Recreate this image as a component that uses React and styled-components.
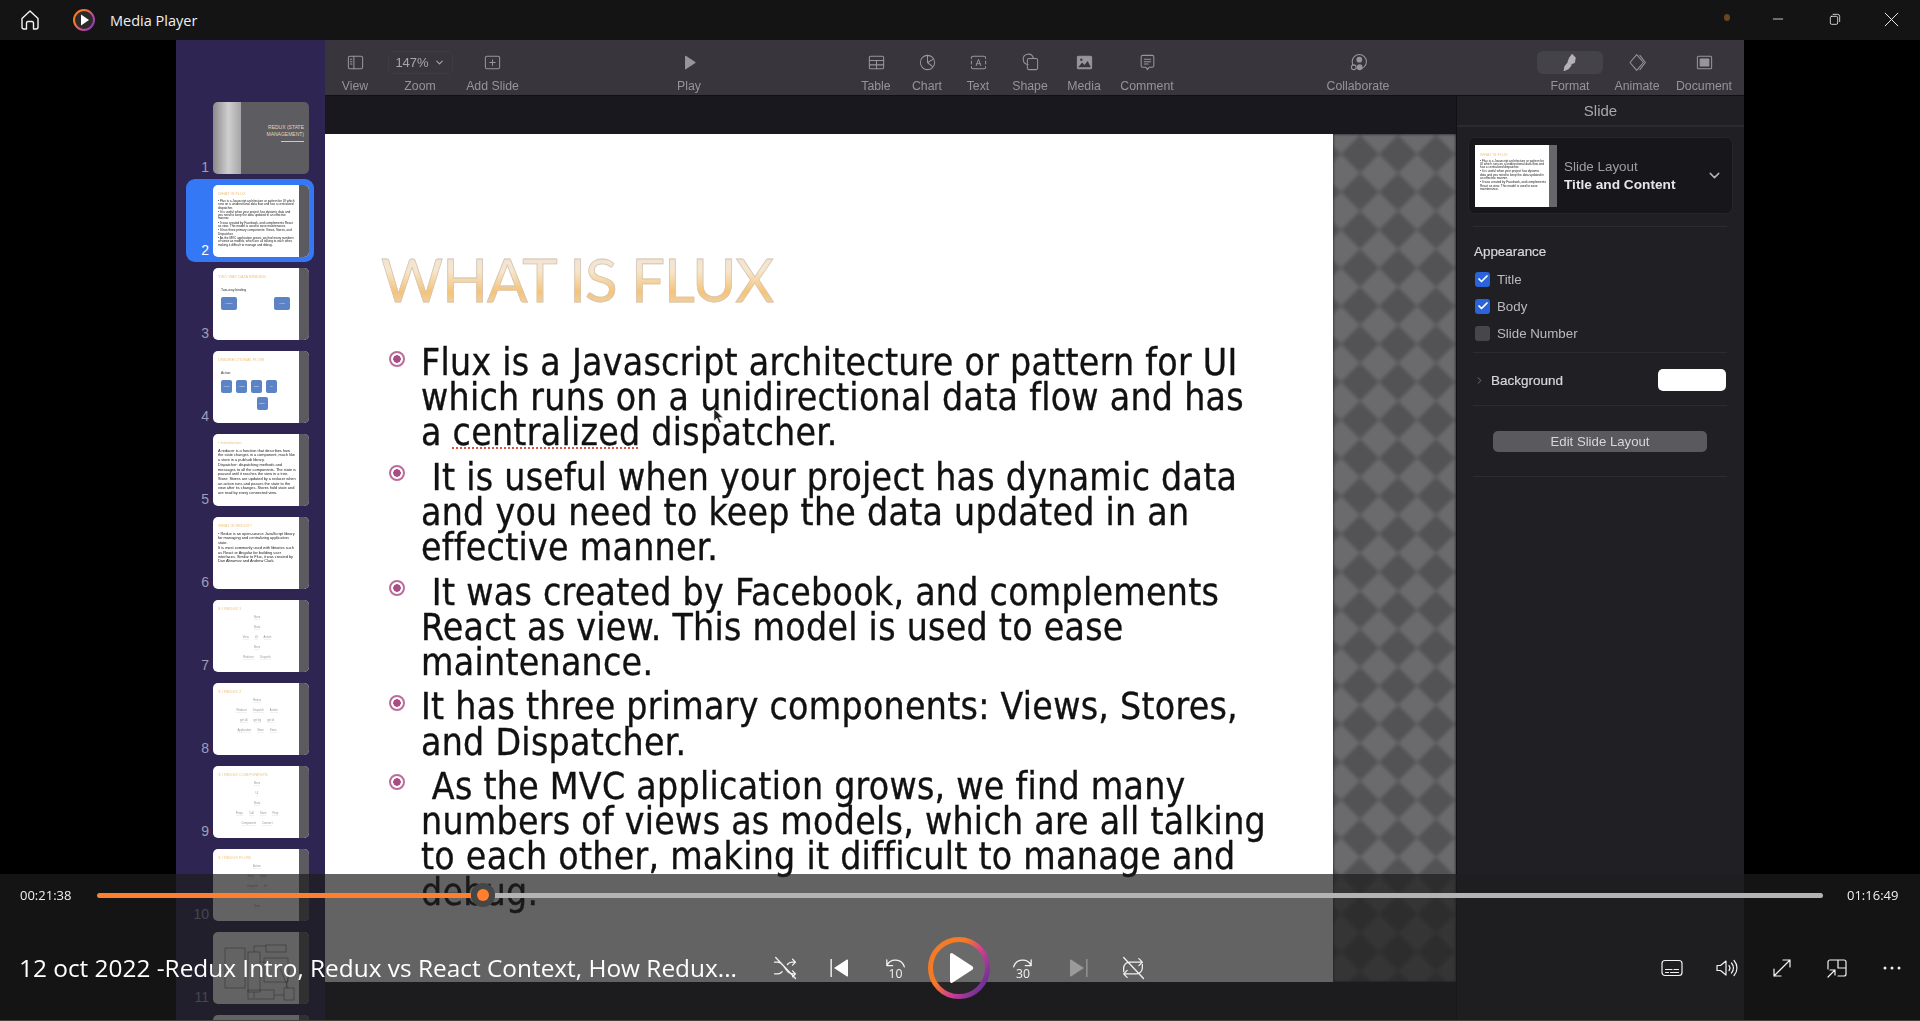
import React from 'react'
import styled, { createGlobalStyle } from 'styled-components'
import { Check, ChevronDown, ChevronRight } from 'lucide-react'

const GlobalStyle = createGlobalStyle`
  html, body, #root { margin: 0; padding: 0; height: 100%; background: #000; }
  * { box-sizing: border-box; }
`

const Misspelt = styled.span`
    text-decoration: underline dotted #e2533f 2px;
    text-underline-offset: 2px;
`

const Icon = ({ size = 20, children, ...rest }) => (
  <svg width={size} height={size} viewBox="0 0 24 24" fill="none" stroke="currentColor" strokeWidth="1.5" strokeLinecap="round" strokeLinejoin="round" {...rest}>
    {children}
  </svg>
)

const toolIcons = {
  view: <><rect x="3" y="4" width="18" height="16" rx="2" /><path d="M10 4v16M5.5 8h2M5.5 11h2M5.5 14h2" /></>,
  add: <><rect x="3" y="4" width="18" height="16" rx="2" /><path d="M12 8.5v7M8.5 12h7" /></>,
  play: <path d="M7 4 19 12 7 20Z" fill="currentColor" />,
  table: <><rect x="3" y="4" width="18" height="16" rx="1.5" /><path d="M3 9.5h18M3 15h18M12 9.5V20" /></>,
  chart: <><circle cx="12" cy="12" r="9" /><path d="M12 3v9l6 5M12 12l7-4" /></>,
  text: <><path d="M5 4h14a2 2 0 0 1 2 2v1M21 17v1a2 2 0 0 1-2 2H5a2 2 0 0 1-2-2v-1M3 7V6a2 2 0 0 1 2-2M3 10v4M21 10v4" /><path d="M9 16l3-8 3 8M10 13.5h4" strokeWidth="1.2" /></>,
  shape: <><path d="M9 14.5A6.5 6.5 0 1 1 15.5 6" /><rect x="8" y="7" width="13" height="14" rx="2" /></>,
  media: <><rect x="3" y="4" width="18" height="16" rx="1.5" fill="currentColor" /><path d="M4 18l5-6 3 3 4-5 4 8Z" fill="#38353c" stroke="none" /><circle cx="8" cy="8.5" r="1.5" fill="#38353c" stroke="none" /></>,
  comment: <><path d="M6 3h12a2 2 0 0 1 2 2v11a2 2 0 0 1-2 2h-4l-2 3-2-3H6a2 2 0 0 1-2-2V5a2 2 0 0 1 2-2Z" /><path d="M8 8h8M8 11h8M8 14h5" /></>,
  collaborate: <><circle cx="13" cy="11" r="9" /><circle cx="13" cy="8.5" r="3" fill="currentColor" /><circle cx="6" cy="18" r="3" fill="#38353c" /><circle cx="13.5" cy="18" r="3" fill="currentColor" /></>,
  format: <><path d="M14 2l4 4-1 6-5 2-3-3 2-5Z" fill="currentColor" /><path d="M9.500 11.500 5 17l-1 5 5-2 4-5" fill="currentColor" /></>,
  animate: <><path d="M11 2l8.5 10L11 22 2.500 12Z" /><path d="M15 3l7 9-7 9" /></>,
  document: <><rect x="3" y="4" width="18" height="16" rx="1.5" /><rect x="6.5" y="7.5" width="11" height="9" fill="currentColor" /></>,
}

const tools = [
  { key: 'view', label: 'View', w: 60 },
  { key: 'zoom', label: 'Zoom', w: 70 },
  { key: 'add', label: 'Add Slide', w: 75 },
  { key: 'play', label: 'Play', w: 60, gap: 129 },
  { key: 'table', label: 'Table', w: 50, gap: 132 },
  { key: 'chart', label: 'Chart', w: 52 },
  { key: 'text', label: 'Text', w: 50 },
  { key: 'shape', label: 'Shape', w: 54 },
  { key: 'media', label: 'Media', w: 54 },
  { key: 'comment', label: 'Comment', w: 72 },
  { key: 'collaborate', label: 'Collaborate', w: 90, gap: 130 },
  { key: 'format', label: 'Format', w: 66, gap: 134, active: true },
  { key: 'animate', label: 'Animate', w: 68 },
  { key: 'document', label: 'Document', w: 66 },
]

const slideParagraphs = [
  ['Flux is a Javascript architecture or pattern for UI', 'which runs on a unidirectional data flow and has', <>a <Misspelt>centralized</Misspelt> dispatcher.</>],
  ['\u00a0It is useful when your project has dynamic data', 'and you need to keep the data updated in an', 'effective manner.'],
  ['\u00a0It was created by Facebook, and complements', 'React as view. This model is used to ease', 'maintenance.'],
  ['It has three primary components: Views, Stores,', 'and Dispatcher.'],
  ['\u00a0As the MVC application grows, we find many', 'numbers of views as models, which are all talking', 'to each other, making it difficult to manage and', 'debug.'],
]

const miniLines = [
  'Flux is a Javascript architecture or pattern for UI which runs on a unidirectional data flow and has a centralized dispatcher.',
  'It is useful when your project has dynamic data and you need to keep the data updated in an effective manner.',
  'It was created by Facebook, and complements React as view. This model is used to ease maintenance.',
  'It has three primary components: Views, Stores, and Dispatcher.',
  'As the MVC application grows, we find many numbers of views as models, which are all talking to each other, making it difficult to manage and debug.',
]

const CoverThumb = () => (
  <CoverBody>
    <CoverBand />
    <CoverTitle>REDUX (STATE<br />MANAGEMENT)<CoverRule /></CoverTitle>
  </CoverBody>
)

const FluxThumb = () => (
  <ThumbBody>
    <ThumbTitle>WHAT IS FLUX</ThumbTitle>
    {miniLines.map((l) => <ThumbText key={l}>• {l}</ThumbText>)}
  </ThumbBody>
)

const BoxesThumb = ({ title, label, boxes }) => (
  <ThumbBody>
    <ThumbTitle>{title}</ThumbTitle>
    <ThumbLabel>{label}</ThumbLabel>
    <BoxRow $spread={boxes.length === 2}>
      {boxes.map((b) => <ThumbBox key={b} $wide={boxes.length === 2}>{b}</ThumbBox>)}
    </BoxRow>
    {boxes.length > 2 && <BoxRow $end><ThumbBox>Store</ThumbBox></BoxRow>}
  </ThumbBody>
)

const TextThumb = ({ title, lines }) => (
  <ThumbBody>
    <ThumbTitle>{title}</ThumbTitle>
    {lines.map((l) => <ThumbText key={l} $large>{l}</ThumbText>)}
  </ThumbBody>
)

const DiagramThumb = ({ title, rows }) => (
  <ThumbBody>
    <ThumbTitle>{title}</ThumbTitle>
    {rows.map((r, i) => (
      <ChipRow key={i}>
        {r.map((c, j) => <ThumbChip key={j}>{c}</ThumbChip>)}
      </ChipRow>
    ))}
  </ThumbBody>
)

const FlowThumb = () => (
  <ThumbBody>
    <svg width="84" height="72" viewBox="0 0 84 72" fill="none" stroke="#444" strokeWidth="0.5">
      <rect x="7" y="10" width="20" height="40" />
      <rect x="30" y="14" width="12" height="40" />
      <rect x="48" y="7" width="20" height="7" />
      <path d="M36 8h12M36 8v6M42 24h10M36 54v6" />
      <rect x="46" y="20" width="24" height="24" />
      <rect x="30" y="52" width="26" height="9" />
      <rect x="66" y="50" width="10" height="12" />
      <path d="M56 57h10M62 30l8 20M72 30l-4 20" />
    </svg>
  </ThumbBody>
)

const EmptyThumb = () => <ThumbBody />

const thumbs = [
  <CoverThumb />,
  <FluxThumb />,
  <BoxesThumb title="TWO WAY DATA BINDING" label="Two-way binding" boxes={['Model', 'View']} />,
  <BoxesThumb title="UNIDIRECTIONAL FLOW" label="Action" boxes={['View', 'Action', 'Disp', 'UI']} />,
  <TextThumb title="• Introduction" lines={['A reducer is a function that describes how the state changes in a component, much like a store in a pub/sub library.', 'Dispatcher: dispatching methods and messages to all the components. The state is passed until it reaches the view in a tree.', 'Store: Stores are updated by a reducer when an action runs and passes the state to the view after its changes. Stores hold state and are read by every connected view.']} />,
  <TextThumb title="WHAT IS REDUX?" lines={['• Redux is an open-source JavaScript library for managing and centralizing application state.', 'It is most commonly used with libraries such as React or Angular for building user interfaces. Similar to Flux, it was created by Dan Abramov and Andrew Clark.']} />,
  <DiagramThumb title="S I REDUX 1" rows={[['Store'], ['State'], ['View', 'UI', 'Action'], ['Store'], ['Reducer', 'Dispatch']]} />,
  <DiagramThumb title="S I REDUX 2" rows={[['Redux'], ['Reducer', 'Dispatch', 'Action'], ['get all', 'get by', 'get id'], ['Application', 'Store', 'Store']]} />,
  <DiagramThumb title="S I REDUX COMPONENTS" rows={[['Store'], ['UI'], ['State'], ['Props', 'Call', 'Store', 'Prop'], ['Component', 'Connect']]} />,
  <DiagramThumb title="S I REDUX FLOW" rows={[['Action'], ['Store', 'State'], ['Dispatch', 'UI'], ['Reducer'], ['View']]} />,
  <FlowThumb />,
  <EmptyThumb />,
]

const TransportIcon = ({ children, dim }) => (
  <ControlButton $dim={dim}><Icon size={28} strokeWidth="1.1">{children}</Icon></ControlButton>
)

const App = () => {
  return (
    <Page>
      <GlobalStyle />
      <TitleBar>
        <HomeButton>
          <Icon size={24} strokeWidth="1.4"><path d="M4 10.5 12 3l8 7.5V19a2 2 0 0 1-2 2h-2.5v-6a1.5 1.5 0 0 0-1.5-1.5h-4A1.5 1.5 0 0 0 8.5 15v6H6a2 2 0 0 1-2-2Z" /></Icon>
        </HomeButton>
        <svg width="24" height="24" viewBox="0 0 24 24">
          <defs>
            <linearGradient id="logoRing" x1="0" y1="0.2" x2="1" y2="0.9">
              <stop offset="0.25" stopColor="#f47a25" />
              <stop offset="0.65" stopColor="#c8439a" />
              <stop offset="1" stopColor="#7d3fc0" />
            </linearGradient>
          </defs>
          <circle cx="12" cy="12" r="10" fill="#2b2b2b" stroke="url(#logoRing)" strokeWidth="2" />
          <path d="M9 6.5 17 12l-8 5.5Z" fill="#fff" />
        </svg>
        <AppName>Media Player</AppName>
        <WindowControls>
          <RecordDot />
          <WindowButton><Icon size={16} strokeWidth="1.2"><path d="M5 12h14" /></Icon></WindowButton>
          <WindowButton><Icon size={16} strokeWidth="1.2"><rect x="5" y="8" width="11" height="12" rx="2" /><path d="M9 5h7a3 3 0 0 1 3 3v8" /></Icon></WindowButton>
          <WindowButton><Icon size={19} strokeWidth="1.2"><path d="M4 4l16 16M20 4 4 20" /></Icon></WindowButton>
        </WindowControls>
      </TitleBar>

      <Stage>
        <Frame>
          <Sidebar>
            {thumbs.map((t, i) => (
              <ThumbRow key={i} $selected={i === 1}>
                <ThumbNumber $selected={i === 1}>{i + 1}</ThumbNumber>
                <Thumb>
                  {t}
                  {i > 0 && <ThumbEdge />}
                </Thumb>
              </ThumbRow>
            ))}
          </Sidebar>

          <Main>
            <Toolbar>
              {tools.map((t) => (
                <ToolItem key={t.key} $w={t.w} $gap={t.gap || 0}>
                  {t.key === 'zoom' ? (
                    <ZoomBox>147% <ChevronDown size={11} strokeWidth={2.4} /></ZoomBox>
                  ) : (
                    <ToolIcon $active={t.active}><Icon size={19} strokeWidth="1.3">{toolIcons[t.key]}</Icon></ToolIcon>
                  )}
                  <ToolLabel>{t.label}</ToolLabel>
                </ToolItem>
              ))}
            </Toolbar>

            <Workspace>
              <Canvas>
                <SlideRow>
                  <Slide>
                    <SlideTitle>WHAT IS FLUX</SlideTitle>
                    <BulletList>
                      {slideParagraphs.map((p, i) => (
                        <BulletItem key={i}>
                          <Bullet />
                          <BulletText>
                            {p.map((line, j) => <React.Fragment key={j}>{line}<br /></React.Fragment>)}
                          </BulletText>
                        </BulletItem>
                      ))}
                    </BulletList>
                    <Pointer width="12" height="17" viewBox="0 0 12 17">
                      <path d="M1 1v12l3-3 2.2 5 2-1-2.2-4.6H10Z" fill="#222" stroke="#ddd" strokeWidth="0.6" />
                    </Pointer>
                  </Slide>
                  <SlidePattern />
                </SlideRow>
              </Canvas>

              <Inspector>
                <InspectorTitle>Slide</InspectorTitle>
                <LayoutCard>
                  <LayoutThumb>
                    <LayoutThumbTitle>WHAT IS FLUX</LayoutThumbTitle>
                    {miniLines.slice(0, 3).map((l) => <ThumbText key={l}>• {l}</ThumbText>)}
                  </LayoutThumb>
                  <LayoutThumbBand />
                  <LayoutText>
                    <LayoutCaption>Slide Layout</LayoutCaption>
                    <LayoutName>Title and Content</LayoutName>
                  </LayoutText>
                  <LayoutChevron><ChevronDown size={17} strokeWidth={2} /></LayoutChevron>
                </LayoutCard>
                <Divider $top={12} />
                <SectionHeading>Appearance</SectionHeading>
                <CheckRow><CheckBox $on><Check size={12} strokeWidth={3.5} /></CheckBox>Title</CheckRow>
                <CheckRow><CheckBox $on><Check size={12} strokeWidth={3.5} /></CheckBox>Body</CheckRow>
                <CheckRow><CheckBox />Slide Number</CheckRow>
                <Divider $top={1} />
                <BackgroundRow>
                  <ChevronRight size={11} strokeWidth={1.6} color="#8d8c90" />
                  <BackgroundLabel>Background</BackgroundLabel>
                  <Swatch />
                </BackgroundRow>
                <Divider $top={14} />
                <EditButton>Edit Slide Layout</EditButton>
                <Divider $top={24} />
              </Inspector>
            </Workspace>
          </Main>
        </Frame>

        <Controls>
          <SeekRow>
            <Time>00:21:38</Time>
            <Track>
              <TrackFill style={{ width: '21.64%' }} />
              <Knob><KnobDot /></Knob>
              <TrackRest />
            </Track>
            <Time>01:16:49</Time>
          </SeekRow>
          <ControlRow>
            <VideoTitle>12 oct 2022 -Redux Intro, Redux vs React Context, How Redux...</VideoTitle>
            <Transport>
              <TransportIcon>
                <path d="M3 7h2.5c2 0 3.5 1 5 3l3 4c1.500 2 3 3 5 3H21M3 17h3c1.500 0 2.500-.7 3.500-1.800M14 9c1-1.300 2.500-2 4-2h3M18.500 4.500 21 7l-2.500 2.500M18.500 14.500 21 17l-2.500 2.500M4 3l17 18" />
              </TransportIcon>
              <ControlButton>
                <svg width="28" height="28" viewBox="0 0 28 28" fill="#fff"><rect x="4.500" y="5" width="1.300" height="18" /><path d="M8 14 21 5.500a.8.8 0 0 1 1 .8v15.400a.8.8 0 0 1-1 .8Z" /></svg>
              </ControlButton>
              <TransportIcon>
                <path d="M5 10a8 8 0 0 1 15 1M5 5v5h5" />
                <SeekLabel x="12.500" y="20.300">10</SeekLabel>
              </TransportIcon>
              <PlayButton>
                <svg width="62" height="62" viewBox="0 0 62 62">
                  <defs>
                    <linearGradient id="playRing" x1="0.1" y1="0.2" x2="0.95" y2="0.8">
                      <stop offset="0.3" stopColor="#f47a25" />
                      <stop offset="0.62" stopColor="#cf3f8f" />
                      <stop offset="1" stopColor="#6f2f9c" />
                    </linearGradient>
                  </defs>
                  <circle cx="31" cy="31" r="28.500" fill="rgba(255,255,255,0.05)" stroke="url(#playRing)" strokeWidth="5" />
                  <path d="M22 17.500a1.500 1.500 0 0 1 2.300-1.200l20 13a2 2 0 0 1 0 3.400l-20 13a1.500 1.500 0 0 1-2.300-1.200Z" fill="#fff" />
                </svg>
              </PlayButton>
              <TransportIcon>
                <path d="M19 10a8 8 0 0 0-15 1M19 5v5h-5" />
                <SeekLabel x="12" y="20.300">30</SeekLabel>
              </TransportIcon>
              <ControlButton $dim>
                <svg width="28" height="28" viewBox="0 0 28 28" fill="#fff"><rect x="22.200" y="5" width="1.300" height="18" /><path d="M20 14 7 5.500a.8.8 0 0 0-1 .8v15.400a.8.8 0 0 0 1 .8Z" /></svg>
              </ControlButton>
              <TransportIcon>
                <path d="M4 15v-3a5 5 0 0 1 5-5h11M17 4l3 3-3 3M20 9v3a5 5 0 0 1-5 5H4M7 20l-3-3 3-3M4 3l17 18" />
              </TransportIcon>
            </Transport>
            <RightControls>
              <ControlButton>
                <Icon size={24} strokeWidth="1.2"><rect x="2" y="4.500" width="20" height="15" rx="3" /><path d="M5.500 13.500h6.500M14 13.500h4.500M5.500 16.500h3M10.500 16.500h8" /></Icon>
              </ControlButton>
              <ControlButton>
                <Icon size={24} strokeWidth="1.200"><path d="M2 9.500v5h3.500L11 19V5L5.500 9.500Z" /><path d="M14 9.500a4 4 0 0 1 0 5M16.500 7a7.500 7.500 0 0 1 0 10M19 4.500a11 11 0 0 1 0 15" /></Icon>
              </ControlButton>
              <ControlButton>
                <Icon size={24} strokeWidth="1.200"><path d="M4 20 20 4M13 4h7v7M4 13v7h7" /></Icon>
              </ControlButton>
              <ControlButton>
                <Icon size={24} strokeWidth="1.200"><path d="M3 13V6a2 2 0 0 1 2-2h14a2 2 0 0 1 2 2v12a2 2 0 0 1-2 2h-6M13 4v8h8M3 21l7-7M5 14h5v5" /></Icon>
              </ControlButton>
              <ControlButton>
                <svg width="24" height="24" viewBox="0 0 24 24" fill="#eee"><circle cx="5" cy="12" r="1.500" /><circle cx="12" cy="12" r="1.500" /><circle cx="19" cy="12" r="1.500" /></svg>
              </ControlButton>
            </RightControls>
          </ControlRow>
        </Controls>
      </Stage>
    </Page>
  )
}

export default App

const Page = styled.div`
    width: 1920px;
    height: 1021px;
    display: flex;
    flex-direction: column;
    overflow: hidden;
    background: #000;
    font-family: "Open Sans", "Noto Sans", sans-serif;
`

const TitleBar = styled.div`
    height: 40px;
    flex: none;
    display: flex;
    align-items: center;
    background: #141414;
    color: #f4f4f4;
`

const HomeButton = styled.div`
    width: 60px;
    margin-right: 12px;
    display: flex;
    justify-content: center;
`

const AppName = styled.div`
    margin-left: 14px;
    font-size: 14.5px;
    color: #f0f0f0;
`

const WindowControls = styled.div`
    margin-left: auto;
    margin-top: -2px;
    display: flex;
    align-items: center;
`

const RecordDot = styled.div`
    width: 6px;
    height: 7px;
    margin: -4px 19px 0 0;
    border-radius: 50%;
    background: #6b4421;
`

const WindowButton = styled.div`
    width: 57px;
    display: flex;
    justify-content: center;
`

const Stage = styled.div`
    position: relative;
    flex: 1;
    min-height: 0;
    display: flex;
    justify-content: center;
`

const Frame = styled.div`
    width: 1568px;
    display: flex;
    font-family: "Liberation Sans", Arial, sans-serif;
    filter: blur(0.35px);
`

const Sidebar = styled.div`
    width: 149px;
    flex: none;
    padding: 56px 11px 0 10px;
    background: #2e2552;
    overflow: hidden;
`

const ThumbRow = styled.div`
    height: 83px;
    display: flex;
    padding: 6px 5px 5px 0;
    border-radius: 9px;
    background: ${(p) => (p.$selected ? '#3478f6' : 'transparent')};
`

const ThumbNumber = styled.div`
    width: 23px;
    margin-right: 4px;
    align-self: flex-end;
    text-align: right;
    font-size: 14px;
    line-height: 14px;
    color: ${(p) => (p.$selected ? '#fff' : '#a29db8')};
`

const Thumb = styled.div`
    width: 96px;
    height: 72px;
    display: flex;
    border-radius: 5px;
    overflow: hidden;
    background: #fff;
    flex: none;
`

const ThumbBody = styled.div`
    flex: 1;
    min-width: 0;
    padding: 6px 3px 0 5px;
    overflow: hidden;
    filter: blur(0.3px);
`

const ThumbEdge = styled.div`
    width: 10px;
    flex: none;
    background: #5b5a61;
`

const CoverBody = styled.div`
    flex: 1;
    display: flex;
    justify-content: space-between;
    background: #5d5c60;
`

const CoverBand = styled.div`
    width: 28px;
    background: linear-gradient(90deg, #8a8a8a, #cfcfcf 55%, #a5a5a5);
`

const CoverTitle = styled.div`
    padding: 22px 5px 0 0;
    text-align: right;
    font-size: 5px;
    line-height: 7px;
    color: #e9d3b4;
`

const CoverRule = styled.div`
    height: 1px;
    margin: 3px 0 0 14px;
    background: #c9c9c9;
`

const ThumbTitle = styled.div`
    margin-bottom: 3px;
    font-size: 4px;
    line-height: 6px;
    white-space: nowrap;
    color: #efc483;
`

const ThumbText = styled.div`
    margin-bottom: 1px;
    font-size: ${(p) => (p.$large ? '3.9px' : '3.1px')};
    line-height: ${(p) => (p.$large ? '4.4px' : '3.3px')};
    color: #1a1a1a;
`

const ThumbLabel = styled.div`
    margin: 8px 0 5px 3px;
    font-size: 3.4px;
    color: #333;
`

const BoxRow = styled.div`
    display: flex;
    gap: 4px;
    justify-content: ${(p) => (p.$spread ? 'space-between' : p.$end ? 'center' : 'flex-start')};
    margin: ${(p) => (p.$end ? '4px 0 0 10px' : '0 6px 0 3px')};
`

const ThumbBox = styled.div`
    width: ${(p) => (p.$wide ? '16px' : '11px')};
    height: 13px;
    border-radius: 2px;
    background: #5b83c6;
    font-size: 2.5px;
    line-height: 13px;
    text-align: center;
    color: #dfe8f7;
`

const ChipRow = styled.div`
    display: flex;
    justify-content: center;
    gap: 6px;
    margin-bottom: 5px;
`

const ThumbChip = styled.div`
    font-size: 2.8px;
    line-height: 4px;
    color: #999;
    border-bottom: 1px solid #f1f1f1;
`

const Main = styled.div`
    flex: 1;
    min-width: 0;
    display: flex;
    flex-direction: column;
`

const Toolbar = styled.div`
    height: 56px;
    flex: none;
    display: flex;
    padding-top: 11px;
    background: #38353c;
    border-bottom: 1px solid #111;
`

const ToolItem = styled.div`
    width: ${(p) => p.$w}px;
    margin-left: ${(p) => p.$gap}px;
    display: flex;
    flex-direction: column;
    align-items: center;
`

const ToolIcon = styled.div`
    width: 100%;
    height: 23px;
    display: flex;
    align-items: center;
    justify-content: center;
    border-radius: 6px;
    color: ${(p) => (p.$active ? '#b5b3b9' : '#98969c')};
    background: ${(p) => (p.$active ? '#45434a' : 'transparent')};
`

const ZoomBox = styled.div`
    width: 65px;
    height: 23px;
    display: flex;
    align-items: center;
    justify-content: center;
    gap: 5px;
    border: 1px solid #3f3c43;
    border-radius: 5px;
    font-size: 13px;
    color: #a9a7ad;
`

const ToolLabel = styled.div`
    margin-top: 5px;
    font-size: 12.3px;
    line-height: 14px;
    white-space: nowrap;
    color: #96949a;
`

const Workspace = styled.div`
    flex: 1;
    min-height: 0;
    display: flex;
`

const Canvas = styled.div`
    flex: 1;
    min-width: 0;
    padding-top: 38px;
    background: #1a181f;
`

const SlideRow = styled.div`
    height: 848px;
    display: flex;
    overflow: hidden;
`

const Slide = styled.div`
    position: relative;
    z-index: 1;
    width: 1008px;
    flex: none;
    overflow: hidden;
    padding: 114px 0 0 56px;
    background: #fff;
    font-family: "DejaVu Sans Condensed", "DejaVu Sans", sans-serif;
`

const SlideTitle = styled.div`
    height: 71px;
    font-family: "Lato", "Open Sans", sans-serif;
    font-size: 60px;
    line-height: 62px;
    letter-spacing: -1px;
    white-space: nowrap;
    width: max-content;
    color: transparent;
    background: linear-gradient(180deg, #efe3d6 12%, #f7e6cc 32%, #f5c376 62%, #ecd9bf 88%);
    -webkit-background-clip: text;
    background-clip: text;
    -webkit-text-stroke: 0.8px #d3c7ba;
`

const BulletList = styled.div`
    margin: 26px 0 0 8px;
    display: flex;
    flex-direction: column;
    gap: 9.2px;
`

const BulletItem = styled.div`
    display: flex;
`

const Bullet = styled.div`
    width: 16px;
    height: 16px;
    flex: none;
    margin: 5.5px 16px 0 0;
    border: 2px solid #bd6c9a;
    border-radius: 50%;
    background: radial-gradient(circle, #a84d84 0 3.5px, #fff 4px);
`

const BulletText = styled.div`
    font-size: 37px;
    line-height: 35.2px;
    letter-spacing: 0.3px;
    white-space: nowrap;
    color: #111;
    -webkit-text-stroke: 0.35px #111;
`

const Pointer = styled.svg`
    position: absolute;
    left: 388px;
    top: 274px;
`

const SlidePattern = styled.div`
    flex: 1;
    background-color: #5f5f61;
    background-image:
      linear-gradient(45deg, #535355 23%, transparent 23%, transparent 77%, #535355 77%),
      linear-gradient(-45deg, #535355 23%, transparent 23%, transparent 77%, #535355 77%),
      linear-gradient(45deg, #6b6b6d 23%, transparent 23%, transparent 77%, #6b6b6d 77%),
      linear-gradient(-45deg, #6b6b6d 23%, transparent 23%, transparent 77%, #6b6b6d 77%);
    background-size: 38px 38px;
    background-position: 27px 20px, 27px 20px, 46px 39px, 46px 39px;
    filter: blur(1.5px);
`

const Inspector = styled.div`
    width: 288px;
    flex: none;
    background: #201f24;
    border-left: 1px solid #111;
    color: #d2d1d4;
`

const InspectorTitle = styled.div`
    height: 31px;
    border-bottom: 2px solid #2b2a2f;
    text-align: center;
    font-size: 15px;
    line-height: 30px;
    color: #a9a8ac;
`

const LayoutCard = styled.div`
    height: 77px;
    margin: 10px 11px 0;
    display: flex;
    align-items: center;
    padding-left: 6px;
    border: 1px solid #26252a;
    border-radius: 7px;
    background: #17161b;
`

const LayoutThumb = styled.div`
    width: 74px;
    height: 62px;
    padding: 7px 3px 0 5px;
    overflow: hidden;
    background: #fff;
    filter: blur(0.3px);
`

const LayoutThumbTitle = styled.div`
    margin-bottom: 3px;
    font-size: 4px;
    color: #efc483;
`

const LayoutThumbBand = styled.div`
    width: 8px;
    height: 62px;
    background: #67666a;
`

const LayoutText = styled.div`
    margin-left: 7px;
    flex: 1;
`

const LayoutCaption = styled.div`
    font-size: 13.4px;
    line-height: 18px;
    color: #9f9ea2;
`

const LayoutName = styled.div`
    font-size: 13.7px;
    line-height: 18px;
    font-weight: bold;
    color: #e6e5e8;
`

const LayoutChevron = styled.div`
    margin-right: 9px;
    display: flex;
    color: #b5b4b8;
`

const Divider = styled.div`
    height: 1px;
    margin: ${(p) => p.$top}px 17px 0 16px;
    background: #2c2b30;
`

const SectionHeading = styled.div`
    margin: 17px 0 11px 17px;
    font-size: 13.4px;
    line-height: 16px;
    color: #d8d7db;
    -webkit-text-stroke: 0.2px #d8d7db;
`

const CheckRow = styled.div`
    height: 16px;
    margin: 0 0 11px 18px;
    display: flex;
    align-items: center;
    gap: 7px;
    font-size: 13.3px;
    color: #bbbabe;
`

const CheckBox = styled.div`
    width: 15px;
    height: 15px;
    display: flex;
    align-items: center;
    justify-content: center;
    border-radius: 3px;
    color: #fff;
    background: ${(p) => (p.$on ? '#2b63d9' : '#47464b')};
`

const BackgroundRow = styled.div`
    height: 22px;
    margin: 16px 17px 0 17px;
    display: flex;
    align-items: center;
`

const BackgroundLabel = styled.div`
    margin-left: 6px;
    flex: 1;
    font-size: 13.5px;
    color: #d8d7db;
    -webkit-text-stroke: 0.2px #d8d7db;
`

const Swatch = styled.div`
    width: 68px;
    height: 22px;
    margin-right: 1px;
    border-radius: 5px;
    background: #fff;
`

const EditButton = styled.div`
    width: 214px;
    height: 21px;
    margin: 25px 0 0 36px;
    border-radius: 5px;
    background: #5a595e;
    text-align: center;
    font-size: 13.2px;
    line-height: 21px;
    color: #d7d6da;
`

const Controls = styled.div`
    position: absolute;
    left: 0;
    right: 0;
    bottom: 0;
    height: 147px;
    display: flex;
    flex-direction: column;
    background: rgba(29, 29, 29, 0.69);
    border-bottom: 1px solid #4a3f3a;
    color: #f2f2f2;
`

const SeekRow = styled.div`
    height: 42px;
    display: flex;
    align-items: center;
    padding: 0 20px;
    gap: 24px;
`

const Time = styled.div`
    font-size: 13px;
    width: 53px;
    white-space: nowrap;
    color: #f0f0f0;
`

const Track = styled.div`
    flex: 1;
    display: flex;
    align-items: center;
`

const TrackFill = styled.div`
    height: 5px;
    border-radius: 3px 0 0 3px;
    background: #ff7f2e;
`

const TrackRest = styled.div`
    flex: 1;
    height: 5px;
    border-radius: 0 3px 3px 0;
    background: #b4b4b4;
`

const Knob = styled.div`
    width: 24px;
    height: 24px;
    flex: none;
    display: flex;
    align-items: center;
    justify-content: center;
    border-radius: 50%;
    background: #464646;
`

const KnobDot = styled.div`
    width: 12px;
    height: 12px;
    border-radius: 50%;
    background: #ff7f2e;
`

const ControlRow = styled.div`
    flex: 1;
    display: flex;
    align-items: flex-start;
    padding: 21px 6px 0 19px;
`

const VideoTitle = styled.div`
    width: 744px;
    height: 62px;
    flex: none;
    font-size: 24.4px;
    font-weight: 500;
    line-height: 62px;
    white-space: nowrap;
    color: #fff;
`

const Transport = styled.div`
    display: flex;
    align-items: center;
    gap: 11px;
`

const RightControls = styled.div`
    margin-left: auto;
    height: 62px;
    display: flex;
    align-items: center;
    gap: 11px;
`

const ControlButton = styled.div`
    width: 44px;
    height: 44px;
    display: flex;
    align-items: center;
    justify-content: center;
    color: #f2f2f2;
    opacity: ${(p) => (p.$dim ? 0.35 : 1)};
`

const PlayButton = styled.div`
    width: 62px;
    height: 62px;
    display: flex;
`

const SeekLabel = styled.text`
    font-family: "Open Sans", sans-serif;
    font-size: 10.5px;
    fill: currentColor;
    stroke: none;
    text-anchor: middle;
`
